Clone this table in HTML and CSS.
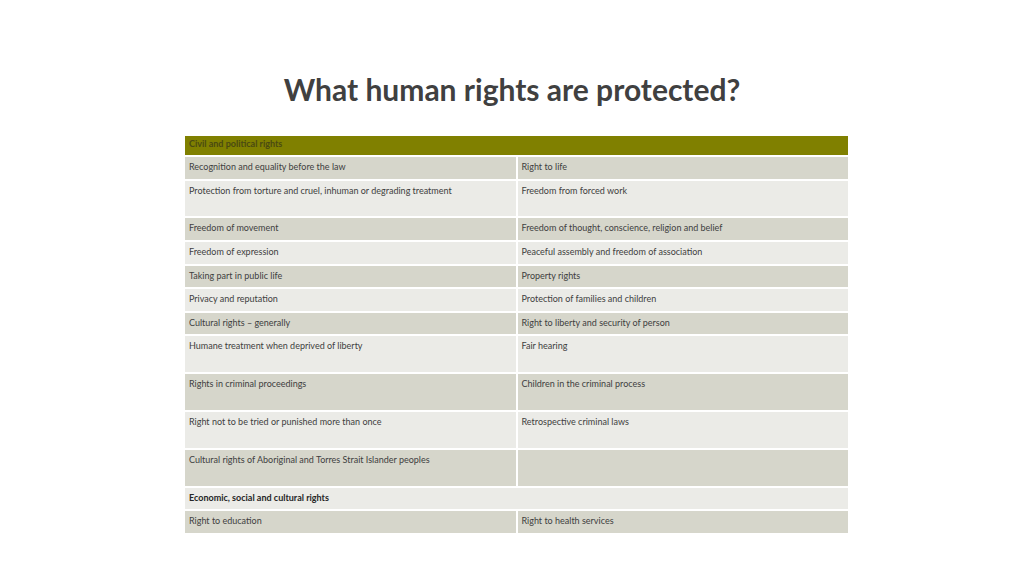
FILE: index.html
```html
<!DOCTYPE html>
<html lang="en">
<head>
<meta charset="utf-8">
<title>What human rights are protected?</title>
<link rel="stylesheet" href="styles.css">
</head>
<body>
<main class="slide">
  <h1 class="title">What human rights are protected?</h1>
  <table class="rights">
    <tr class="head"><td colspan="2">Civil and political rights</td></tr>
    <tr class="dark"><td>Recognition and equality before the law</td><td>Right to life</td></tr>
    <tr class="light tall"><td>Protection from torture and cruel, inhuman or degrading treatment</td><td>Freedom from forced work</td></tr>
    <tr class="dark"><td>Freedom of movement</td><td>Freedom of thought, conscience, religion and belief</td></tr>
    <tr class="light"><td>Freedom of expression</td><td>Peaceful assembly and freedom of association</td></tr>
    <tr class="dark"><td>Taking part in public life</td><td>Property rights</td></tr>
    <tr class="light"><td>Privacy and reputation</td><td>Protection of families and children</td></tr>
    <tr class="dark"><td>Cultural rights – generally</td><td>Right to liberty and security of person</td></tr>
    <tr class="light tall"><td>Humane treatment when deprived of liberty</td><td>Fair hearing</td></tr>
    <tr class="dark tall"><td>Rights in criminal proceedings</td><td>Children in the criminal process</td></tr>
    <tr class="light tall"><td>Right not to be tried or punished more than once</td><td>Retrospective criminal laws</td></tr>
    <tr class="dark tall"><td>Cultural rights of Aboriginal and Torres Strait Islander peoples</td><td></td></tr>
    <tr class="light section"><td colspan="2">Economic, social and cultural rights</td></tr>
    <tr class="dark last"><td>Right to education</td><td>Right to health services</td></tr>
  </table>
</main>
</body>
</html>
```
FILE: styles.css
```css
html, body {
  margin: 0;
  padding: 0;
  background: #ffffff;
}

.slide {
  width: 1024px;
  height: 576px;
  padding-top: 69px;
  box-sizing: border-box;
  font-family: Lato, "Open Sans", "Liberation Sans", sans-serif;
}

.title {
  margin: 0;
  height: 65px;
  text-align: center;
  font-size: 30px;
  line-height: 40px;
  font-weight: 700;
  color: #404040;
}

.rights {
  margin-left: 183px;
  width: 667px;
  border-collapse: collapse;
  table-layout: fixed;
  font-size: 9px;
  color: #404040;
}

.rights td {
  border: 2px solid #ffffff;
  padding: 4px 4px 0 4px;
  vertical-align: top;
  box-sizing: border-box;
  line-height: 11px;
  width: 50%;
}

.rights tr td:first-child { width: 333px; }

.rights .head td {
  background: #808000;
  color: #4a4a12;
  font-weight: 700;
  height: 21px;
  padding-top: 2px;
}

.rights .dark td { background: #d6d6cb; height: 23.6px; }
.rights .light td { background: #ebebe7; height: 23.6px; }
.rights .tall td { height: 37.8px; }

.rights .section td {
  font-weight: 700;
  color: #262626;
  height: 23.6px;
}

.rights .last td { height: 24px; }
```
